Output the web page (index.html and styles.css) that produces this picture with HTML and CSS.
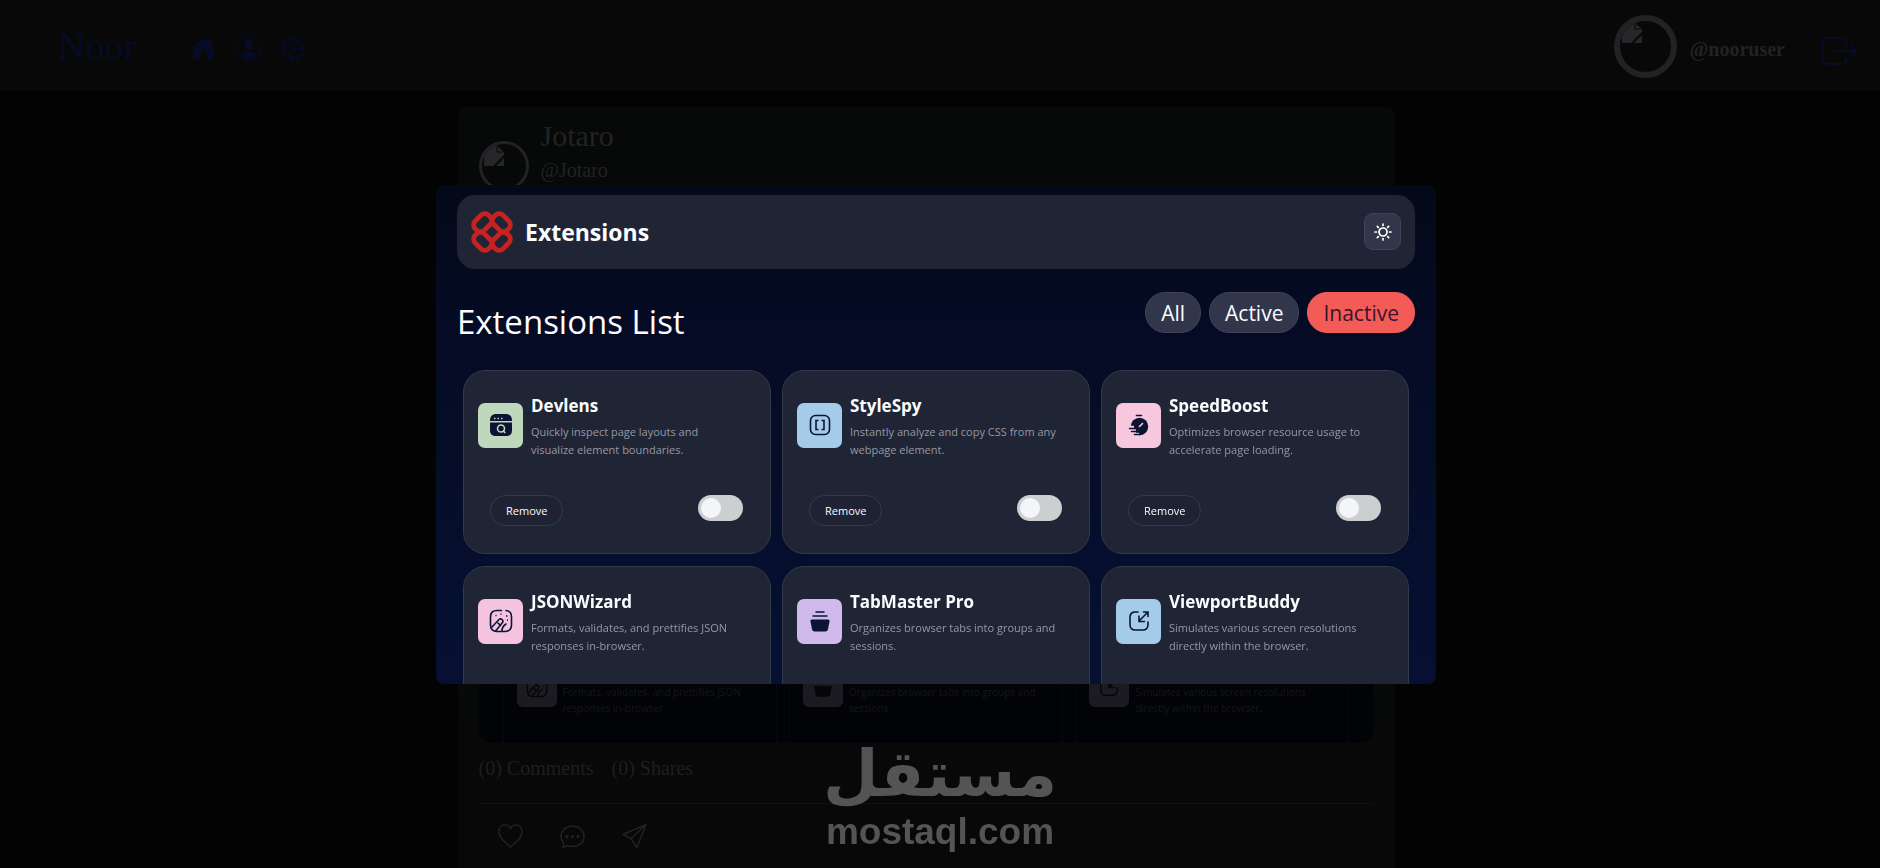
FILE: index.html
```
<!DOCTYPE html>
<html lang="en">
<head>
<meta charset="utf-8">
<title>Noor</title>
<link rel="stylesheet" href="styles.css">
</head>
<body>

<!-- shared icons -->
<svg class="sprite" aria-hidden="true">
	<symbol id="ic-broken" viewBox="0 0 20 20">
		<path d="M0 0h13l7 6v3L9 20H0z" fill="#26262b"/>
		<path d="M20 12v8h-8z" fill="#26262b"/>
		<path d="M13 1v5h6" fill="none" stroke="#09090a" stroke-width="1"/>
	</symbol>
	<symbol id="ic-json" viewBox="0 0 24 24">
		<path d="M12.500 1.500H8C3.500 1.500 1.500 3.500 1.500 8v8c0 4.500 2 6.500 6.500 6.500h8c4.500 0 6.500-2 6.500-6.500V8c0-4.200-1.600-6.200-5.500-6.500" fill="none" stroke="currentColor" stroke-width="1.600" stroke-linecap="round"/>
		<path d="M3 18l7-7.500c2-1.800 5 .8 3.500 3L7 21.500M9 14l2.500 2.500M13 22c0-3 1.500-5.500 4-7" fill="none" stroke="currentColor" stroke-width="1.600" stroke-linecap="round"/>
		<path d="M6.500 6.500h1M12 4.500v1M17 7h1.500M18 11h1" stroke="currentColor" stroke-width="1.500"/>
	</symbol>
	<symbol id="ic-tab" viewBox="0 0 24 24">
		<path d="M8 3h8M5 7h14" stroke="currentColor" stroke-width="1.500" stroke-linecap="round"/>
		<path d="M4 10.500h16c1.200 0 1.800.8 1.500 2l-1.500 7.500c-.4 1.800-1.200 2.500-3 2.500H7c-1.800 0-2.600-.7-3-2.500L2.500 12.500c-.3-1.200.3-2 1.500-2z" fill="currentColor"/>
	</symbol>
	<symbol id="ic-view" viewBox="0 0 24 24">
		<path d="M11 3H8.500C4.500 3 3 4.500 3 8.500v7c0 4 1.500 5.500 5.500 5.500h7c4 0 5.500-1.500 5.500-5.500V13" fill="none" stroke="currentColor" stroke-width="1.600" stroke-linecap="round"/>
		<path d="M21 3l-9 9M12 7v5.500h5.500M16.500 3H21v4.500" fill="none" stroke="currentColor" stroke-width="1.600" stroke-linecap="round"/>
	</symbol>
</svg>

<nav class="navbar">
	<a class="brand" href="#">Noor</a>
	<div class="nav-links">
		<a href="#" aria-label="Home"><svg viewBox="0 0 25 25"><path d="M12.500 1.500L18 6V4h3v5l2 2v12.500h-7V18c0-2-1.500-3-3.500-3S9 16 9 18v5.500H2V11z" fill="currentColor"/></svg></a>
		<a href="#" aria-label="Profile"><svg viewBox="0 0 25 25"><circle cx="12.500" cy="12.500" r="11.700" fill="none" stroke="currentColor" stroke-width="1.500"/><circle cx="12.500" cy="9" r="4.500" fill="currentColor"/><path d="M4 19c2-2.500 5-3.500 8.500-3.500S19 16.500 21 19c-2 3-5 4.800-8.500 4.800S6 22 4 19z" fill="currentColor"/></svg></a>
		<a href="#" aria-label="Settings"><svg viewBox="0 0 25 25"><circle cx="12.500" cy="12.500" r="9" fill="none" stroke="currentColor" stroke-width="1.500"/><circle cx="12.500" cy="12.500" r="11" fill="none" stroke="currentColor" stroke-width="2.500" stroke-dasharray="2.880 2.880"/><path d="M12 12.500h9M12 12.500L8 5M12 12.500L8 20" stroke="currentColor" stroke-width="1.500"/></svg></a>
	</div>
	<div class="account">
		<span class="avatar avatar-lg"><svg width="20" height="20"><use href="#ic-broken"/></svg></span>
		<b>@nooruser</b>
		<button class="logout" aria-label="Log out"><svg viewBox="0 0 36 28"><path d="M24 8V4c0-2-1-3-3-3H4C2 1 1 2 1 4v20c0 2 1 3 3 3h17c2 0 3-1 3-3v-4M12 14h22M28 8l6 6-6 6" fill="none" stroke="currentColor" stroke-width="2"/></svg></button>
	</div>
</nav>

<div class="feed">
<main class="post">
	<div class="post-head">
		<span class="avatar"><svg width="20" height="20"><use href="#ic-broken"/></svg></span>
		<div>
			<div class="post-name">Jotaro</div>
			<div class="post-user">@Jotaro</div>
		</div>
	</div>
	<div class="post-image">
		<div class="mini">
			<span class="mini-icon"><svg><use href="#ic-json"/></svg></span>
			<p>Formats, validates, and prettifies JSON responses in-browser.</p>
		</div>
		<div class="mini">
			<span class="mini-icon"><svg><use href="#ic-tab"/></svg></span>
			<p>Organizes browser tabs into groups and sessions.</p>
		</div>
		<div class="mini">
			<span class="mini-icon"><svg><use href="#ic-view"/></svg></span>
			<p>Simulates various screen resolutions directly within the browser.</p>
		</div>
	</div>
	<div class="post-stats">
		<span>(0) Comments</span>
		<span>(0) Shares</span>
	</div>
	<div class="post-actions">
		<button aria-label="Like"><svg viewBox="0 0 25 25"><path d="M12.500 24C8 20 1 15.500 1 8.500 1 4.500 3.500 2 7 2c2.500 0 4.500 1.500 5.500 3.500C13.500 3.500 15.500 2 18 2c3.500 0 6 2.500 6 6.500 0 7-7 11.500-11.500 15.500z" fill="none" stroke="currentColor" stroke-width="1.500"/></svg></button>
		<button aria-label="Comment"><svg viewBox="0 0 25 25"><path d="M3 24c.8-1.500.8-3 .3-4.500C1.800 17.500 1 15.500 1 13.500 1 7.500 6 3 12.500 3S24 7.500 24 13.500 19 23.500 12.500 23.500c-2 0-3.500-.3-5-1C6 23.500 4.500 24 3 24z" fill="none" stroke="currentColor" stroke-width="1.500"/><g fill="currentColor"><circle cx="7" cy="13.500" r="1.500"/><circle cx="12.500" cy="13.500" r="1.500"/><circle cx="18" cy="13.500" r="1.500"/></g></svg></button>
		<button aria-label="Share"><svg viewBox="0 0 25 25"><path d="M24 1.500L1 11.500l8 4L15 24.500zM24 1.500L9 15.500" fill="none" stroke="currentColor" stroke-width="1.500" stroke-linejoin="round"/></svg></button>
	</div>
</main>
</div>

<div class="overlay">
	<section class="modal">
		<header class="ext-header">
			<svg class="ext-logo" viewBox="0 0 40 40"><g fill="none" stroke="#c7221f" stroke-width="4.800">
				<rect id="petal" x="1.200" y="4.200" width="19" height="13" rx="5.500" transform="rotate(-45 10.700 10.700)"/>
				<use href="#petal" transform="rotate(90 20 20)"/>
				<use href="#petal" transform="rotate(180 20 20)"/>
				<use href="#petal" transform="rotate(270 20 20)"/>
			</g></svg>
			<h1>Extensions</h1>
			<button class="theme" aria-label="Toggle theme"><svg viewBox="0 0 18 18"><g fill="none" stroke="#fff" stroke-width="1.700" stroke-linecap="round"><circle cx="9" cy="9" r="4"/><path d="M9 1v1.500M9 15.500V17M1 9h1.500M15.500 9H17M3.300 3.300l1 1M13.700 13.700l1 1M3.300 14.700l1-1M13.700 4.300l1-1"/></g></svg></button>
		</header>

		<div class="list-head">
			<h2>Extensions List</h2>
			<div class="filters">
				<button>All</button>
				<button>Active</button>
				<button class="selected">Inactive</button>
			</div>
		</div>

		<div class="grid">
			<article class="card">
				<div class="info">
					<span class="icon green"><svg viewBox="0 0 24 24"><path d="M1 8C1 3.500 3 1 7.500 1h9C21 1 23 3.500 23 8z" fill="currentColor"/><path d="M1 9.500h22V17c0 4.500-2 6-6.500 6h-9C3 23 1 21.500 1 17z" fill="currentColor"/><path d="M5 5.500h1.500M8.500 5.500H10M12 5.500h1.500" stroke="#bfd8bb" stroke-width="1.500"/><circle cx="12" cy="15.500" r="3.500" fill="none" stroke="#bfd8bb" stroke-width="1.600"/><path d="M14 17.500l2.200 2.500" stroke="#bfd8bb" stroke-width="1.600"/></svg></span>
					<div><h3>Devlens</h3><p>Quickly inspect page layouts and visualize element boundaries.</p></div>
				</div>
				<div class="actions"><button>Remove</button><input type="checkbox" class="toggle" aria-label="Devlens"></div>
			</article>
			<article class="card">
				<div class="info">
					<span class="icon blue"><svg viewBox="0 0 24 24"><rect x="2.500" y="2.500" width="19" height="19" rx="5" fill="none" stroke="currentColor" stroke-width="1.600"/><path d="M10.500 7.500H8v9h2.500M13.500 7.500H16v9h-2.500" fill="none" stroke="currentColor" stroke-width="1.600"/></svg></span>
					<div><h3>StyleSpy</h3><p>Instantly analyze and copy CSS from any webpage element.</p></div>
				</div>
				<div class="actions"><button>Remove</button><input type="checkbox" class="toggle" aria-label="StyleSpy"></div>
			</article>
			<article class="card">
				<div class="info">
					<span class="icon pink"><svg viewBox="0 0 24 24"><circle cx="12.500" cy="13.500" r="8.700" fill="currentColor"/><path d="M9.500 2.500h5" stroke="currentColor" stroke-width="1.600" stroke-linecap="round"/><path d="M12.500 13.500l3-3" stroke="#f7c7dd" stroke-width="1.600" stroke-linecap="round"/><path d="M2 14.500h5M3 18h6M6 21.500h6" stroke="#f7c7dd" stroke-width="3.600"/><path d="M2.500 15.500H8M4.500 18.500H10M7.500 21.500H13" stroke="currentColor" stroke-width="1.500" stroke-linecap="round"/></svg></span>
					<div><h3>SpeedBoost</h3><p>Optimizes browser resource usage to accelerate page loading.</p></div>
				</div>
				<div class="actions"><button>Remove</button><input type="checkbox" class="toggle" aria-label="SpeedBoost"></div>
			</article>
			<article class="card">
				<div class="info">
					<span class="icon rose"><svg><use href="#ic-json"/></svg></span>
					<div><h3>JSONWizard</h3><p>Formats, validates, and prettifies JSON responses in-browser.</p></div>
				</div>
			</article>
			<article class="card">
				<div class="info">
					<span class="icon purple"><svg><use href="#ic-tab"/></svg></span>
					<div><h3>TabMaster Pro</h3><p>Organizes browser tabs into groups and sessions.</p></div>
				</div>
			</article>
			<article class="card">
				<div class="info">
					<span class="icon blue"><svg><use href="#ic-view"/></svg></span>
					<div><h3>ViewportBuddy</h3><p>Simulates various screen resolutions directly within the browser.</p></div>
				</div>
			</article>
		</div>
	</section>
</div>

<div class="watermark">
	<span class="wm-ar" lang="ar" dir="rtl">مستقل</span>
	<span class="wm-en">mostaql.com</span>
</div>

</body>
</html>
```
FILE: styles.css
```
*{
	box-sizing:border-box;
}
body{
	margin:0;
	height:100vh;
	overflow:hidden;
	background-color:#030303;
	font-family:"Liberation Serif",serif;
	color:#222225;
}
button{
	font-family:inherit;
	border:none;
	background:none;
	padding:0;
	color:inherit;
}
h1,h2,h3,p{
	margin:0;
}
svg{
	display:block;
}
.sprite{
	display:none;
}

/* top bar */
.navbar{
	display:flex;
	align-items:center;
	height:91px;
	padding:0 22px 0 58px;
	background-color:#080808;
	color:#060b26;
}
.brand{
	font-size:38px;
	color:inherit;
	text-decoration:none;
}
.nav-links{
	display:flex;
	gap:20px;
	margin-left:55px;
	padding-top:6px;
}
.nav-links a{
	color:inherit;
}
.nav-links svg{
	width:25px;
	height:25px;
}
.account{
	display:flex;
	align-items:center;
	margin-left:auto;
	padding-top:2px;
}
.account b{
	margin:6px 37px 0 13px;
	font-size:20px;
	color:#222225;
}
.avatar{
	width:50px;
	height:50px;
	padding:2px;
	border:3px solid #222224;
	border-radius:50%;
	overflow:hidden;
}
.avatar-lg{
	width:63px;
	height:63px;
	border-width:6px;
}
.logout{
	padding-top:8px;
}
.logout svg{
	width:36px;
	height:28px;
}

/* post */
.feed{
	padding:16px 28px 0 0;
}
.post{
	max-width:937px;
	margin:0 auto;
	padding:10px 21px 15px;
	border-radius:10px;
	background:linear-gradient(#070908,#080808);
}
.post-head{
	display:flex;
	gap:12px;
}
.post-head .avatar{
	margin-top:24px;
}
.post-name{
	font-size:30px;
	line-height:38px;
}
.post-user{
	font-size:20px;
	line-height:30px;
}
.post-image{
	display:flex;
	align-items:flex-end;
	gap:12px;
	height:552px;
	padding:0 24px;
	border-radius:14px;
	overflow:hidden;
	background-color:#020307;
}
.mini{
	flex:1;
	display:flex;
	gap:6px;
	height:107px;
	padding:30px 13px 0;
	border:1px solid #07080b;
	border-bottom:none;
	font-family:"Open Sans",sans-serif;
	font-size:10px;
	line-height:16px;
	color:#161618;
}
.mini p{
	padding-top:17px;
}
.mini-icon{
	display:flex;
	align-items:center;
	justify-content:center;
	flex:none;
	width:40px;
	height:40px;
	border-radius:6px;
	background-color:#1c1b22;
	color:#050608;
}
.mini-icon svg{
	width:22px;
	height:22px;
}
.post-stats{
	display:flex;
	gap:18px;
	padding:14px 0 23px;
	border-bottom:1px solid #101010;
	font-size:20px;
	line-height:23px;
	color:#1e1e21;
}
.post-actions{
	display:flex;
	gap:37px;
	padding:19px;
}
.post-actions svg{
	width:25px;
	height:25px;
}

/* opened picture */
.overlay{
	position:fixed;
	inset:0 8px 0 0;
	display:flex;
	align-items:center;
	justify-content:center;
}
.modal{
	width:1000px;
	max-width:100%;
	height:499px;
	padding:10px 21px;
	border-radius:8px;
	overflow:hidden;
	background:linear-gradient(#040918,#050b25 30%,#050d27 50%,#061033);
	font-family:"Open Sans",sans-serif;
	color:#fbfcfe;
}
.ext-header{
	display:flex;
	align-items:center;
	gap:13px;
	height:74px;
	padding:0 14px 0 15px;
	border-radius:18px;
	background-color:#202535;
}
.ext-logo{
	width:40px;
	height:40px;
	overflow:visible;
}
.ext-header h1{
	font-size:23px;
	font-weight:700;
}
.theme{
	display:flex;
	align-items:center;
	justify-content:center;
	width:37px;
	height:37px;
	margin-left:auto;
	border:1px solid #3e4356;
	border-radius:9px;
	background-color:#31364a;
}
.theme svg{
	width:18px;
	height:18px;
}
.list-head{
	display:flex;
	justify-content:space-between;
	align-items:flex-start;
	padding:23px 0 28px;
}
.list-head h2{
	padding-top:10px;
	font-size:33px;
	font-weight:400;
	line-height:40px;
}
.filters{
	display:flex;
	gap:8px;
}
.filters button{
	height:41px;
	padding:1px 15px 0;
	border:1px solid #3e4356;
	border-radius:20px;
	background-color:#31364a;
	font-size:21px;
}
.filters .selected{
	border-color:#f35c56;
	background-color:#f35c56;
	color:#3b1330;
}
.grid{
	display:grid;
	grid-template-columns:repeat(3,1fr);
	gap:12px 11px;
	padding:0 6px;
}
.card{
	display:flex;
	flex-direction:column;
	justify-content:space-between;
	height:184px;
	padding:22px 14px 27px;
	border:1px solid #343949;
	border-radius:22px;
	background-color:#202535;
}
.info{
	display:flex;
	gap:8px;
	padding-right:16px;
}
.icon{
	display:flex;
	align-items:center;
	justify-content:center;
	flex:none;
	width:45px;
	height:45px;
	margin-top:10px;
	border-radius:7px;
	color:#0c1333;
}
.icon svg{
	width:24px;
	height:24px;
}
.green{ background-color:#bfd8bb; }
.blue{ background-color:#a5cbea; }
.pink{ background-color:#f7c7dd; }
.rose{ background-color:#f3c3df; }
.purple{ background-color:#d0b9ec; }
.card h3{
	font-size:17px;
	line-height:26px;
}
.card p{
	padding-top:4px;
	font-size:11px;
	line-height:18px;
	color:#9598a3;
}
.actions{
	display:flex;
	justify-content:space-between;
	align-items:flex-start;
	padding:0 13px 0 12px;
}
.actions button{
	height:31px;
	padding:0 15px;
	border:1px solid #353a4a;
	border-radius:16px;
	background-color:#1e2232;
	font-size:11px;
}
.toggle{
	appearance:none;
	width:45px;
	height:26px;
	margin:0;
	padding:3px;
	border-radius:13px;
	background-color:#cccfd0;
}
.toggle::before{
	content:"";
	display:block;
	width:20px;
	height:20px;
	border-radius:50%;
	background-color:#f4f5f8;
}

.watermark{
	position:fixed;
	left:0;
	right:0;
	bottom:15px;
	display:flex;
	flex-direction:column;
	align-items:center;
	color:#545456;
	font-weight:700;
}
.wm-ar{
	font-family:"DejaVu Sans",sans-serif;
	font-size:64px;
	line-height:74px;
}
.wm-en{
	font-family:"Liberation Sans",sans-serif;
	font-size:37px;
	line-height:42px;
}
```
